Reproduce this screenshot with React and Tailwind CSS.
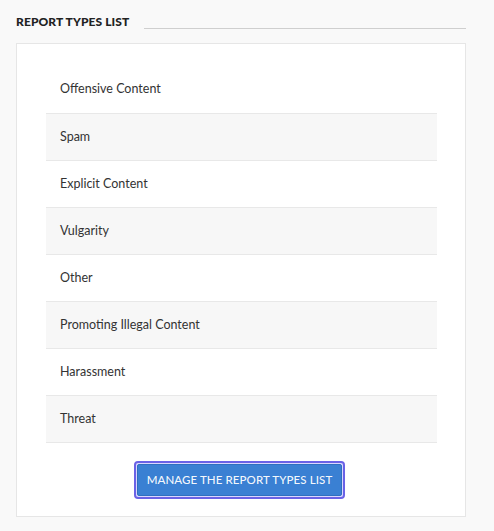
import React from "react";

const items = [
  "Offensive Content",
  "Spam",
  "Explicit Content",
  "Vulgarity",
  "Other",
  "Promoting Illegal Content",
  "Harassment",
  "Threat",
];

export default function App() {
  return (
    <div
      className="w-[494px] h-[531px] bg-[#f9f9f9] pt-[14px] px-[16px] text-[#333]"
      style={{ fontFamily: "Lato, 'Noto Sans', sans-serif" }}
    >
      <div className="flex items-center w-[450px] h-[16px]">
        <h2 className="text-[12px] font-black text-[#222] tracking-[0.1px] leading-none">REPORT TYPES LIST</h2>
        <div className="flex-1 ml-[15px] mt-[12px] h-[1px] bg-[#cfcfcf]" />
      </div>
      <div className="mt-[13px] w-[450px] h-[474px] bg-white border border-[#e6e6e6] pt-[22px] px-[29px]">
        <ul className="w-[391px]">
          {items.map((t, i) => (
            <li
              key={t}
              className={
                "flex items-center pl-[14px] text-[12.5px] " +
                (i % 2 === 1 ? "bg-[#f7f7f7] " : "bg-white ") +
                (i === 0 ? "" : "border-t border-[#e8e8e8] ") +
                (i === items.length - 1 ? "h-[48px] border-b border-[#e8e8e8]" : "h-[47px]")
              }
            >
              {t}
            </li>
          ))}
        </ul>
        <div className="flex justify-center mt-[18px] pr-[3px]">
          <button className="h-[38px] w-[211px] rounded-[4px] border-2 border-[#6a62e6] p-[1px] bg-[#d9d7ff]">
            <span className="flex h-full w-full items-center justify-center bg-[#3a80d3] border border-[#2f6fbf] rounded-[2px] text-[11.5px] font-medium text-white/95 tracking-[0.1px]">
              MANAGE THE REPORT TYPES LIST
            </span>
          </button>
        </div>
      </div>
    </div>
  );
}
